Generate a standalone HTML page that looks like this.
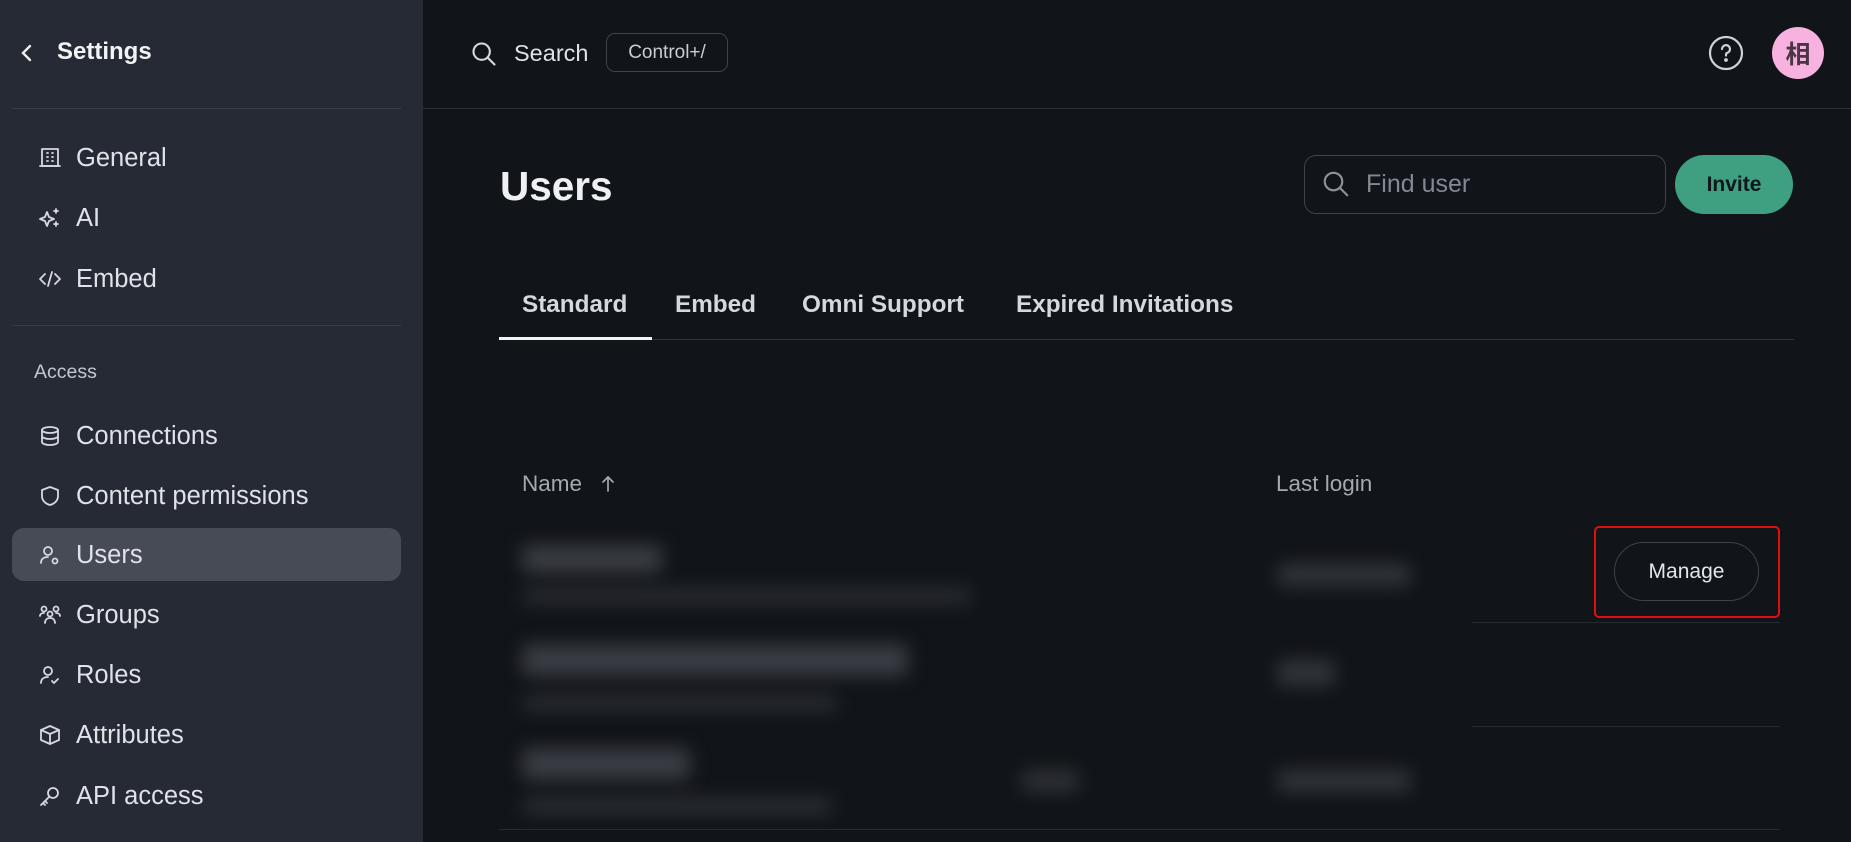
<!DOCTYPE html>
<html><head><meta charset="utf-8"><style>
*{box-sizing:border-box;margin:0;padding:0}
body{width:1851px;height:842px;overflow:hidden;background:#111418;font-family:"Liberation Sans","Noto Sans CJK SC",sans-serif;color:#e6e8ec;position:relative}
.abs{position:absolute}
#side{left:0;top:0;width:423px;height:842px;background:#262a35}
.hr{position:absolute;height:1px;background:#393d48}
.item{position:absolute;left:38px;font-size:25.5px;color:#dfe2e7;height:30px;line-height:30px;display:flex;align-items:center}
.item svg{width:24px;height:24px;margin-right:14px;fill:none;stroke:#d6d9df;stroke-width:1.8;stroke-linecap:round;stroke-linejoin:round}
.tab{position:absolute;top:291px;font-size:24.3px;font-weight:bold;color:#d5d8de}
.blur{position:absolute;background:#3a3d44;filter:blur(9px);border-radius:6px}
</style></head><body>
<div id="side" class="abs">
  <svg class="abs" style="left:19px;top:42px" width="16" height="22" viewBox="0 0 16 22"><path d="M11 4L4 11L11 18" stroke="#eee" stroke-width="2.4" fill="none" stroke-linecap="round"/></svg>
  <div class="abs" style="left:57px;top:38px;font-size:24px;font-weight:bold;color:#f2f3f5">Settings</div>
  <div class="hr" style="left:12px;top:108px;width:389px"></div>
  <div class="item" style="top:143px"><svg viewBox="0 0 24 24"><rect x="4" y="3" width="16" height="17"/><path d="M2 20h20M9 7h1M14 7h1M9 11h1M14 11h1M9 15h1M14 15h1"/></svg>General</div>
  <div class="item" style="top:203px"><svg viewBox="0 0 24 24"><path d="M9 6l2 5 5 2-5 2-2 5-2-5-5-2 5-2z"/><path d="M18 3v4M16 5h4M18 16v4M16 18h4"/></svg>AI</div>
  <div class="item" style="top:264px"><svg viewBox="0 0 24 24"><path d="M7 7l-5 5 5 5M17 7l5 5-5 5M14 5l-4 14"/></svg>Embed</div>
  <div class="hr" style="left:12px;top:325px;width:389px"></div>
  <div class="abs" style="left:34px;top:361px;font-size:19.5px;color:#c3c7cf">Access</div>
  <div class="item" style="top:421px"><svg viewBox="0 0 24 24"><ellipse cx="12" cy="6" rx="8" ry="3"/><path d="M4 6v12c0 1.7 3.6 3 8 3s8-1.3 8-3V6M4 12c0 1.7 3.6 3 8 3s8-1.3 8-3"/></svg>Connections</div>
  <div class="item" style="top:481px"><svg viewBox="0 0 24 24"><path d="M12 3l8 3v6c0 5-4 8-8 9-4-1-8-4-8-9V6z"/></svg>Content permissions</div>
  <div class="abs" style="left:12px;top:528px;width:389px;height:53px;background:#474b55;border-radius:12px"></div>
  <div class="item" style="top:540px"><svg viewBox="0 0 24 24"><circle cx="10" cy="8" r="4"/><path d="M3 20c0-4 3-6 7-6"/><circle cx="17" cy="18" r="2.5"/></svg>Users</div>
  <div class="item" style="top:600px"><svg viewBox="0 0 24 24"><circle cx="6" cy="6" r="2.5"/><circle cx="18" cy="6" r="2.5"/><circle cx="12" cy="11" r="2.5"/><path d="M2 13c0-2 2-3 4-3M22 13c0-2-2-3-4-3M7 20c0-3 2-5 5-5s5 2 5 5"/></svg>Groups</div>
  <div class="item" style="top:660px"><svg viewBox="0 0 24 24"><circle cx="10" cy="8" r="4"/><path d="M3 20c0-4 3-6 7-6M14 18l2 2 4-4"/></svg>Roles</div>
  <div class="item" style="top:720px"><svg viewBox="0 0 24 24"><path d="M12 3l9 4v10l-9 4-9-4V7z"/><path d="M3 7l9 4 9-4M12 11v10"/></svg>Attributes</div>
  <div class="item" style="top:781px"><svg viewBox="0 0 24 24"><circle cx="15" cy="9" r="5"/><path d="M11 13l-8 8M5 19l2 2M7 17l2 2"/></svg>API access</div>
</div>

<div class="hr" style="left:423px;top:108px;width:1428px;background:#2b2f37"></div>
<svg class="abs" style="left:470px;top:40px" width="28" height="28" viewBox="0 0 24 24" fill="none" stroke="#d6d9df" stroke-width="1.8" stroke-linecap="round"><circle cx="10" cy="10" r="7"/><path d="M15 15l6 6"/></svg>
<div class="abs" style="left:514px;top:40px;font-size:23.5px;color:#dfe2e7">Search</div>
<div class="abs" style="left:606px;top:33px;width:122px;height:39px;border:1px solid #3d424b;border-radius:9px;font-size:19px;color:#c8ccd3;text-align:center;line-height:37px">Control+/</div>
<svg class="abs" style="left:1708px;top:35px" width="36" height="36" viewBox="0 0 36 36" fill="none" stroke="#cfd3d9" stroke-width="2.2"><circle cx="18" cy="18" r="16"/><path d="M14 14a4 4 0 1 1 5 4c-1 .5-1 1-1 2.5" stroke-linecap="round"/><circle cx="18" cy="25" r="0.8" fill="#cfd3d9"/></svg>
<div class="abs" style="left:1772px;top:27px;width:52px;height:52px;border-radius:50%;background:#f8b2e0;color:#4a3542;font-size:25px;text-align:center;line-height:52px;font-family:'Noto Sans CJK SC',sans-serif;font-weight:bold">相</div>

<div class="abs" style="left:500px;top:163px;font-size:40.5px;font-weight:bold;color:#eef0f3">Users</div>
<div class="abs" style="left:1304px;top:155px;width:362px;height:59px;border:1px solid #3d424b;border-radius:12px"></div>
<svg class="abs" style="left:1321px;top:169px" width="30" height="30" viewBox="0 0 24 24" fill="none" stroke="#8d929b" stroke-width="1.7" stroke-linecap="round"><circle cx="10" cy="10" r="7"/><path d="M15 15l6 6"/></svg>
<div class="abs" style="left:1366px;top:170px;font-size:25px;color:#838894">Find user</div>
<div class="abs" style="left:1675px;top:155px;width:118px;height:59px;border-radius:30px;background:#3e9f81;color:#10161a;font-size:21px;font-weight:bold;text-align:center;line-height:59px">Invite</div>

<div class="tab" style="left:522px">Standard</div>
<div class="tab" style="left:675px">Embed</div>
<div class="tab" style="left:802px">Omni Support</div>
<div class="tab" style="left:1016px">Expired Invitations</div>
<div class="hr" style="left:499px;top:339px;width:1295px;background:#2e323a"></div>
<div class="abs" style="left:499px;top:337px;width:153px;height:3px;background:#f2f3f5"></div>

<div class="abs" style="left:522px;top:471px;font-size:22.5px;color:#a4a9b2">Name</div>
<svg class="abs" style="left:600px;top:474px" width="16" height="20" viewBox="0 0 16 20" fill="none" stroke="#a4a9b2" stroke-width="1.7" stroke-linecap="round"><path d="M8 17V3M3 8l5-5 5 5"/></svg>
<div class="abs" style="left:1276px;top:471px;font-size:22.5px;color:#a4a9b2">Last login</div>

<div class="blur" style="left:522px;top:545px;width:140px;height:28px"></div>
<div class="blur" style="left:522px;top:588px;width:450px;height:16px;opacity:.6"></div>
<div class="blur" style="left:1277px;top:564px;width:134px;height:22px;opacity:.8"></div>
<div class="blur" style="left:522px;top:644px;width:386px;height:32px"></div>
<div class="blur" style="left:522px;top:695px;width:316px;height:16px;opacity:.6"></div>
<div class="blur" style="left:1277px;top:660px;width:58px;height:26px;opacity:.8"></div>
<div class="blur" style="left:522px;top:748px;width:168px;height:32px"></div>
<div class="blur" style="left:522px;top:797px;width:310px;height:18px;opacity:.6"></div>
<div class="blur" style="left:1021px;top:770px;width:58px;height:22px;opacity:.7"></div>
<div class="blur" style="left:1277px;top:770px;width:134px;height:22px;opacity:.8"></div>

<div class="abs" style="left:1614px;top:542px;width:145px;height:59px;border:1px solid #3d424b;border-radius:30px;font-size:21px;color:#e3e6ea;text-align:center;line-height:57px">Manage</div>
<div class="abs" style="left:1594px;top:526px;width:186px;height:92px;border:2px solid #e01010;border-radius:5px"></div>
<div class="hr" style="left:1472px;top:622px;width:308px;background:#262a31"></div>
<div class="hr" style="left:1472px;top:726px;width:308px;background:#262a31"></div>
<div class="hr" style="left:499px;top:829px;width:1281px;background:#262a31"></div>
</body></html>
